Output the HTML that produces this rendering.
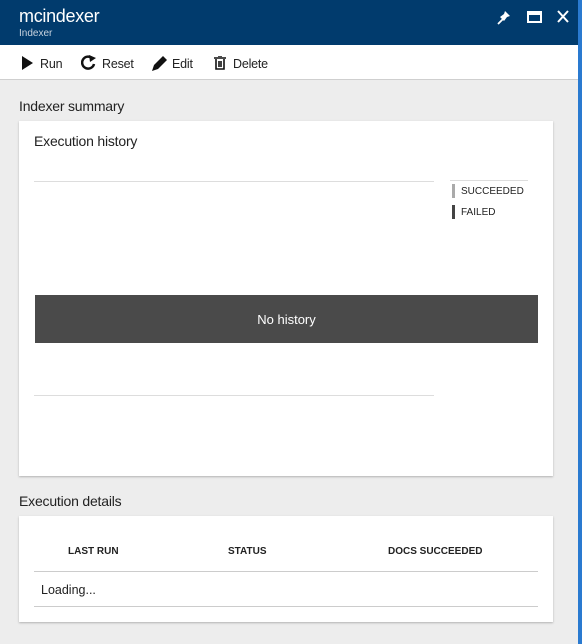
<!DOCTYPE html>
<html><head><style>
*{margin:0;padding:0;box-sizing:border-box}
body{width:582px;height:644px;overflow:hidden;background:#ededed;font-family:"Liberation Sans",sans-serif;position:relative;color:#222}
.hdr{position:absolute;left:0;top:0;width:582px;height:45px;background:#013b6d}
.t1{position:absolute;left:19px;top:6px;color:#fff;font-size:18px;letter-spacing:-0.3px}
.t2{position:absolute;left:19px;top:28px;color:#c8d3df;font-size:10px}
.tb{position:absolute;left:0;top:45px;width:578px;height:35px;background:#fff;border-bottom:1px solid #cfcfcf}
.tb span{position:absolute;top:12px;font-size:12.5px;letter-spacing:-0.2px}
.edge{position:absolute;right:0;top:0;width:4px;height:644px;background:#2a7ad0}
.lbl{position:absolute;left:19px;font-size:14px;letter-spacing:-0.2px}
.card{position:absolute;left:19px;background:#fff;box-shadow:0 1px 2px rgba(0,0,0,.25)}
</style></head><body>
<div class="hdr"><div class="t1">mcindexer</div><div class="t2">Indexer</div>
<svg style="position:absolute;left:496px;top:9px" width="76" height="16">
<path d="M2 15 L8 9" stroke="#fff" stroke-width="1.8"/><path d="M9 2 L14 7 L11 8 L8 12 L4 8 L8 5Z" fill="#fff"/>
<rect x="32" y="3" width="13" height="10" fill="none" stroke="#fff" stroke-width="2"/><rect x="32" y="3" width="13" height="3" fill="#fff"/>
<path d="M62 2 L72 13 M72 2 L62 13" stroke="#fff" stroke-width="2"/></svg></div>
<div class="tb">
<svg style="position:absolute;left:21px;top:11px" width="12" height="14"><path d="M1 0 L12 7 L1 14Z" fill="#111"/></svg><span style="left:40px">Run</span>
<svg style="position:absolute;left:81px;top:10px" width="16" height="16"><path d="M11 3 A6 6 0 1 0 13 9" fill="none" stroke="#111" stroke-width="2.5"/><path d="M8 0 L15 3 L9 7Z" fill="#111"/></svg><span style="left:102px">Reset</span>
<svg style="position:absolute;left:151px;top:10px" width="17" height="17"><path d="M1 16 L3 10 L12 1 L16 5 L7 14Z" fill="#111"/></svg><span style="left:172px">Edit</span>
<svg style="position:absolute;left:214px;top:11px" width="12" height="14"><path d="M0 2 H12 M4 0 H8 M2 3 V13 H10 V3 M5 5 V11 M7 5 V11" stroke="#111" stroke-width="1.6" fill="none"/></svg><span style="left:233px">Delete</span>
</div>
<div class="lbl" style="top:98px">Indexer summary</div>
<div class="card" style="top:121px;width:534px;height:355px">
<div style="position:absolute;left:15px;top:12px;font-size:14px;letter-spacing:-0.2px">Execution history</div>
<div style="position:absolute;left:15px;top:60px;width:400px;height:1px;background:#ddd"></div>
<div style="position:absolute;left:15px;top:274px;width:400px;height:1px;background:#ddd"></div>
<div style="position:absolute;left:431px;top:59px;width:78px;height:1px;background:#ddd"></div>
<div style="position:absolute;left:433px;top:63px;width:3px;height:14px;background:#aaa"></div>
<div style="position:absolute;left:442px;top:65px;font-size:10px">SUCCEEDED</div>
<div style="position:absolute;left:433px;top:84px;width:3px;height:14px;background:#444"></div>
<div style="position:absolute;left:442px;top:86px;font-size:10px">FAILED</div>
<div style="position:absolute;left:16px;top:174px;width:503px;height:48px;background:#4a4a4a;color:#fff;font-size:13px;text-align:center;line-height:50px">No history</div>
</div>
<div class="lbl" style="top:493px">Execution details</div>
<div class="card" style="top:516px;width:534px;height:106px">
<div style="position:absolute;left:49px;top:30px;font-size:10px;font-weight:bold">LAST RUN</div>
<div style="position:absolute;left:209px;top:30px;font-size:10px;font-weight:bold">STATUS</div>
<div style="position:absolute;left:369px;top:30px;font-size:10px;font-weight:bold">DOCS SUCCEEDED</div>
<div style="position:absolute;left:15px;top:55px;width:504px;height:1px;background:#ccc"></div>
<div style="position:absolute;left:22px;top:67px;font-size:12.5px">Loading...</div>
<div style="position:absolute;left:15px;top:90px;width:504px;height:1px;background:#ccc"></div>
</div>
<div class="edge"></div>
</body></html>
